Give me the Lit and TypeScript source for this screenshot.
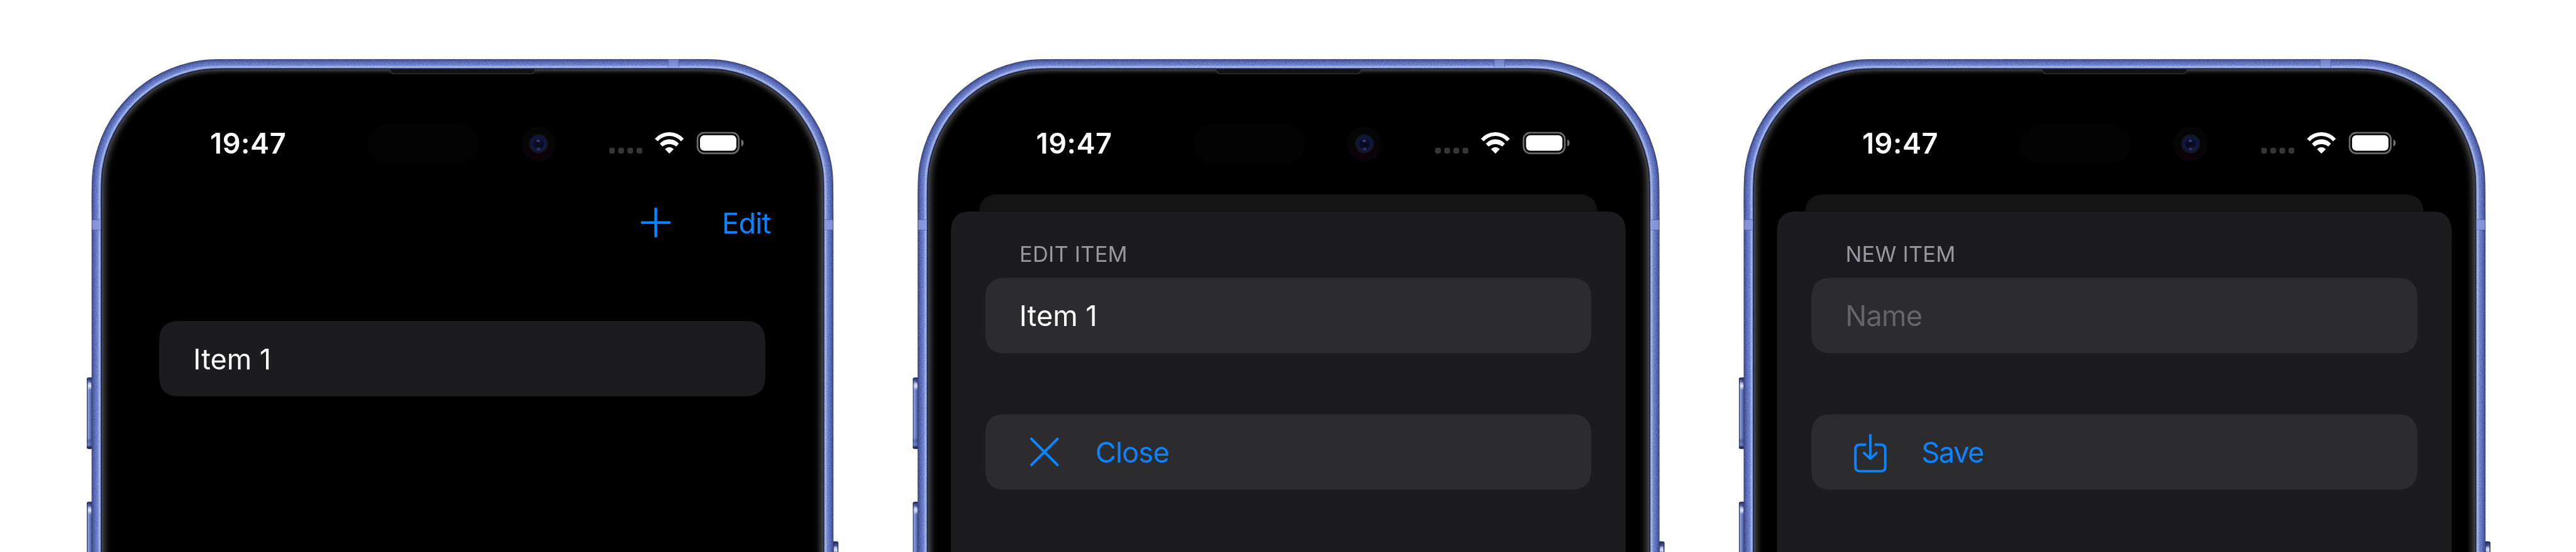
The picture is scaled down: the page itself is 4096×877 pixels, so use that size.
import { LitElement, html, svg, css } from "lit";
import { customElement, property } from "lit/decorators.js";

type RGB = [number, number, number];

/** Closed rounded rectangle whose corners ease into the straight edges. */
function smoothRect(x: number, y: number, w: number, h: number, r: number, s: number): string {
  const rad = Math.PI / 180;
  const p = (1 + s) * r;
  const beta = 90 * (1 - s);
  const arc = Math.sin((beta / 2) * rad) * r * Math.SQRT2;
  const alpha = (90 - beta) / 2;
  const p34 = r * Math.tan((alpha / 2) * rad);
  const c = p34 * Math.cos(45 * s * rad);
  const d = c * Math.tan(45 * s * rad);
  const b = (p - arc - c - d) / 3;
  const a = 2 * b;
  return [
    `M${x + w - p},${y}`,
    `c${a},0 ${a + b},0 ${a + b + c},${d}`,
    `a${r},${r} 0 0 1 ${arc},${arc}`,
    `c${d},${c} ${d},${b + c} ${d},${a + b + c}`,
    `L${x + w},${y + h}`,
    `L${x},${y + h}`,
    `L${x},${y + p}`,
    `c0,${-a} 0,${-(a + b)} ${d},${-(a + b + c)}`,
    `a${r},${r} 0 0 1 ${arc},${-arc}`,
    `c${c},${-d} ${b + c},${-d} ${a + b + c},${-d}`,
    "Z",
  ].join("");
}

/** Colour across the metal band, from the outer edge (0) to the glass (17.5). */
const BAND: [number, RGB][] = [
  [0, [66, 74, 120]],
  [1, [62, 74, 134]],
  [3, [76, 94, 168]],
  [6, [94, 114, 192]],
  [10, [112, 132, 210]],
  [12.5, [152, 174, 230]],
  [14, [184, 204, 240]],
  [15, [132, 152, 214]],
  [16, [52, 66, 130]],
  [17, [14, 20, 52]],
  [17.6, [16, 18, 30]],
];

/** Reflection that fades over the black glass. */
const GLASS: [number, RGB][] = [
  [18, [72, 72, 72]],
  [20, [54, 54, 54]],
  [24, [30, 30, 30]],
  [29, [10, 10, 10]],
  [34, [0, 0, 0]],
];

function mix(stops: [number, RGB][], t: number): string {
  let i = 0;
  while (i < stops.length - 2 && stops[i + 1][0] < t) i++;
  const [t0, c0] = stops[i];
  const [t1, c1] = stops[i + 1];
  const k = Math.min(1, Math.max(0, (t - t0) / (t1 - t0)));
  return `rgb(${c0.map((v, n) => Math.round(v + (c1[n] - v) * k)).join(",")})`;
}

const FW = 1296;
const FH = 2700;
const R = 222;

function ring(inset: number, insetY = inset): string {
  return smoothRect(inset, insetY, FW - 2 * inset, FH, R - (inset + insetY) / 2, 0.2);
}

const RINGS: { d: string; fill: string }[] = [];
for (let t = 0; t < 18; t += 0.75) RINGS.push({ d: ring(t), fill: mix(BAND, t) });
for (let t = 18; t <= 34; t += 1) RINGS.push({ d: ring(t, 18 + (t - 18) * 0.65), fill: mix(GLASS, t) });

@customElement("phone-bezel")
export class PhoneBezel extends LitElement {
  static styles = css`
    :host {
      display: block;
    }
    svg {
      display: block;
      width: 1320px;
      height: 861px;
    }
  `;

  private sideButton(x: number, y: number, h: number, side: "l" | "r") {
    return svg`
      <g transform="translate(${x} ${y})">
        <rect width="12" height=${h} rx="3" fill=${`url(#btn-${side})`}></rect>
        <rect width="12" height=${h} rx="3" fill="url(#btn-v)"></rect>
        <rect x=${side === "l" ? 2 : 4} y="8" width="6" height="14" rx="3" fill="url(#btn-shine)"></rect>
      </g>`;
  }

  render() {
    return html`
      <svg viewBox="-12 0 1320 861">
        <defs>
          <linearGradient id="btn-l" x1="0" x2="1" y1="0" y2="0">
            <stop offset="0" stop-color="#2c3868"></stop>
            <stop offset="0.1" stop-color="#4a5a98"></stop>
            <stop offset="0.2" stop-color="#93a8de"></stop>
            <stop offset="0.36" stop-color="#7388cb"></stop>
            <stop offset="0.6" stop-color="#5668b2"></stop>
            <stop offset="0.72" stop-color="#3c4a8c"></stop>
          </linearGradient>
          <linearGradient id="btn-r" x1="1" x2="0" y1="0" y2="0">
            <stop offset="0" stop-color="#2c3868"></stop>
            <stop offset="0.1" stop-color="#4a5a98"></stop>
            <stop offset="0.2" stop-color="#93a8de"></stop>
            <stop offset="0.36" stop-color="#7388cb"></stop>
            <stop offset="0.6" stop-color="#5668b2"></stop>
            <stop offset="0.72" stop-color="#3c4a8c"></stop>
          </linearGradient>
          <linearGradient id="btn-v" x1="0" x2="0" y1="0" y2="1">
            <stop offset="0" stop-color="#141c44" stop-opacity="0.9"></stop>
            <stop offset="0.05" stop-color="#2a3670" stop-opacity="0.5"></stop>
            <stop offset="0.1" stop-color="#2a3670" stop-opacity="0"></stop>
            <stop offset="0.84" stop-color="#2a3670" stop-opacity="0"></stop>
            <stop offset="0.89" stop-color="#2a3670" stop-opacity="0.45"></stop>
            <stop offset="0.94" stop-color="#5a6cb4" stop-opacity="0.4"></stop>
            <stop offset="0.98" stop-color="#141c44" stop-opacity="0.9"></stop>
          </linearGradient>
          <linearGradient id="btn-shine" x1="0" x2="0" y1="0" y2="1">
            <stop offset="0" stop-color="#dfe8f8" stop-opacity="0.4"></stop>
            <stop offset="0.5" stop-color="#e6eefb" stop-opacity="0.95"></stop>
            <stop offset="1" stop-color="#dfe8f8" stop-opacity="0"></stop>
          </linearGradient>
          <linearGradient id="lens-low" x1="0" x2="0" y1="0" y2="1">
            <stop offset="0.45" stop-color="#050506"></stop>
            <stop offset="0.75" stop-color="#0a0308"></stop>
          </linearGradient>
          <radialGradient id="lens">
            <stop offset="0" stop-color="#080a1c"></stop>
            <stop offset="0.5" stop-color="#0a0c26"></stop>
            <stop offset="0.68" stop-color="#101a4c"></stop>
            <stop offset="0.8" stop-color="#12142c"></stop>
            <stop offset="1" stop-color="#15161f"></stop>
          </radialGradient>
          <radialGradient id="glint">
            <stop offset="0" stop-color="#5a66a8"></stop>
            <stop offset="1" stop-color="#1a2458" stop-opacity="0"></stop>
          </radialGradient>
          <filter id="grain" x="0" y="0" width="100%" height="100%" color-interpolation-filters="sRGB">
            <feTurbulence type="fractalNoise" baseFrequency="0.7" numOctaves="2" seed="4"></feTurbulence>
            <feColorMatrix values="4 0 0 0 -1.6  4 0 0 0 -1.6  4 0 0 0 -1.3  0 0 0 0 0.1"></feColorMatrix>
            <feComposite in2="SourceAlpha" operator="in"></feComposite>
          </filter>
          <clipPath id="crop"><rect x="-12" y="0" width="1320" height="861"></rect></clipPath>
        </defs>

        ${this.sideButton(-8.3, 556, 124.5, "l")}
        ${this.sideButton(-8.3, 773, 124.5, "l")}
        ${this.sideButton(1292.6, 842, 200, "r")}

        ${RINGS.map((r) => svg`<path d=${r.d} fill=${r.fill}></path>`)}
        <g clip-path="url(#crop)">
          <path
            filter="url(#grain)"
            fill-rule="evenodd"
            d="${smoothRect(1, 1, FW - 2, 900, R - 1, 0.2)} ${smoothRect(15.5, 15.5, FW - 31, 900, R - 15.5, 0.2)}"
          ></path>
        </g>

        <g fill="#8c9ae0" fill-opacity="0.85">
          <rect x="1" y="280.7" width="15" height="17.6"></rect>
          <rect x="1280" y="280.7" width="15" height="17.6"></rect>
          <rect x="1007.3" y="1" width="18" height="14" fill-opacity="0.65"></rect>
        </g>
        <g fill="#3c4a88" fill-opacity="0.5">
          <rect x="1" y="280" width="15" height="1"></rect>
          <rect x="1" y="298" width="15" height="1"></rect>
          <rect x="1280" y="280" width="15" height="1"></rect>
          <rect x="1280" y="298" width="15" height="1"></rect>
          <rect x="1006.6" y="1" width="1" height="14"></rect>
          <rect x="1025" y="1" width="1" height="14"></rect>
        </g>

        <path
          d="M520,18 C523,19 522,25.6 528,25.6 H768 C774,25.6 773,19 776,18 Z"
          fill="#121212"
        ></path>
        <path
          d="M520,18 C523,19 522,25.6 528,25.6 H768 C774,25.6 773,19 776,18"
          fill="none"
          stroke="#3e3e3e"
          stroke-width="1.2"
        ></path>

        <rect x="482" y="114.7" width="194.5" height="66.5" rx="33" fill="#030303"></rect>
        <circle cx="780.5" cy="148" r="30.3" fill="url(#lens-low)"></circle>
        <circle cx="780.7" cy="148" r="16.5" fill="url(#lens)"></circle>
        <ellipse cx="780.2" cy="142.8" rx="5.5" ry="3.8" fill="url(#glint)"></ellipse>
        <ellipse cx="780.8" cy="157" rx="5.5" ry="4.2" fill="url(#glint)" opacity="0.7"></ellipse>
      </svg>
    `;
  }
}

@customElement("status-bar")
export class StatusBar extends LitElement {
  static styles = css`
    :host {
      display: flex;
      align-items: center;
      justify-content: space-between;
      height: 100px;
      margin-top: 97.3px;
      padding: 0 98px 0 149px;
    }
    .time {
      font-size: 49.5px;
      font-weight: 600;
      letter-spacing: 0.65px;
      line-height: 100px;
      color: #fff;
    }
    svg {
      display: block;
      width: 235px;
      height: 40px;
    }
  `;

  render() {
    return html`
      <span class="time">19:47</span>
      <svg viewBox="0 0 235 40">
        ${[0, 16, 32, 48].map((x) => svg`<rect x=${x} y="28" width="10" height="10" rx="3.4" fill="#363636"></rect>`)}
        <g fill="#fff">
          <path d="M80,12.3 A33.4,33.4 0 0 1 130.6,12.3 L125.6,16.7 A26.8,26.8 0 0 0 85,16.7 Z"></path>
          <path d="M88.7,20.9 A21.5,21.5 0 0 1 121.9,20.9 L117.4,25.7 A19.4,19.4 0 0 0 93.2,25.7 Z"></path>
          <path d="M97.6,30.4 Q105.3,23.2 113,30.4 L105.9,37.6 Q105.3,38.2 104.7,37.6 Z"></path>
        </g>
        <rect x="154.5" y="1.6" width="72" height="36" rx="11.5" fill="none" stroke="#6a6a6a" stroke-width="3"></rect>
        <rect x="158.8" y="5.8" width="63.6" height="27.4" rx="7.5" fill="#fff"></rect>
        <path d="M231,13.4 Q235,15.4 235,19.6 Q235,23.8 231,25.8 Z" fill="#757575"></path>
      </svg>
    `;
  }
}

const plusIcon = svg`
  <path d="M26.5,2.6 V50.4 M2.6,26.5 H50.4" fill="none" stroke="#0a84ff" stroke-width="4.8" stroke-linecap="round"></path>`;

const closeIcon = svg`
  <path d="M20.7,18 L66.3,63.6 M66.3,18 L20.7,63.6" fill="none" stroke="#0a84ff" stroke-width="4.4" stroke-linecap="round"></path>`;

const saveIcon = svg`
  <g fill="none" stroke="#0a84ff" stroke-width="4.3">
    <path d="M36,28.2 H25 Q17.2,28.2 17.2,36 V66.6 Q17.2,74.5 25,74.5 H61.6 Q69.4,74.5 69.4,66.6 V36 Q69.4,28.2 61.6,28.2 H50.7"></path>
    <path d="M43.3,11.5 V52.6" stroke-linecap="round"></path>
    <path d="M32.4,42.6 L43.3,52.8 L54.2,42.6" stroke-linecap="round" stroke-linejoin="round"></path>
  </g>`;

@customElement("phone-mockup")
export class PhoneMockup extends LitElement {
  @property() kind: "list" | "edit" | "new" = "list";

  static styles = css`
    :host {
      display: block;
      position: relative;
      width: 1296px;
      height: 861px;
      flex: none;
    }
    .bezel {
      position: absolute;
      top: 0;
      left: -12px;
    }
    .screen {
      position: relative;
      display: flex;
      flex-direction: column;
      box-sizing: border-box;
      width: 1179px;
      height: 861px;
      margin-left: 58.5px;
    }
    .nav {
      display: flex;
      align-items: center;
      gap: 89.6px;
      height: 100px;
      margin-top: 39.7px;
      padding-left: 900.7px;
    }
    .plus {
      display: block;
      width: 53px;
      height: 53px;
      margin-top: -2.4px;
    }
    .label {
      font-size: 49.5px;
      line-height: 100px;
      white-space: pre;
    }
    .blue {
      color: #0a84ff;
    }
    .tight {
      letter-spacing: -0.8px;
    }
    .tighter {
      letter-spacing: -1.5px;
    }
    .white {
      color: #fff;
    }
    .dim {
      color: #656569;
    }
    .card {
      display: flex;
      align-items: center;
      box-sizing: border-box;
      height: 132px;
      margin: 0 60px;
      padding: 1px 59.7px 0;
      border-radius: 46px;
      corner-shape: superellipse(1.7);
      background: #2c2c2e;
    }
    .list {
      margin-top: 120px;
    }
    .list .card {
      padding-top: 2px;
      background: #1c1c1e;
    }
    .back-wrap {
      height: 68.7px;
      overflow: hidden;
    }
    .back {
      height: 90px;
      margin: 38.7px 48.6px 0;
      border-radius: 46px 46px 0 0;
      corner-shape: superellipse(1.7);
      background: #141414;
    }
    .sheet {
      flex: 1;
      border-radius: 46px 46px 0 0;
      corner-shape: superellipse(1.7);
      background: #1c1c1e;
    }
    .heading {
      margin: 48.5px 0 15.5px 119.9px;
      font-size: 37.7px;
      line-height: 52px;
      letter-spacing: 0.3px;
      color: #98989f;
    }
    .action {
      margin-top: 106px;
      gap: 46.8px;
    }
    .icon {
      display: block;
      flex: none;
      width: 86px;
      height: 80px;
      margin-top: -2px;
    }
  `;

  private renderList() {
    return html`
      <div class="nav">
        <svg class="plus" viewBox="0 0 53 53">${plusIcon}</svg>
        <span class="label blue tight">Edit</span>
      </div>
      <div class="list">
        <div class="card"><span class="label white">Item 1</span></div>
      </div>
    `;
  }

  private renderSheet() {
    const edit = this.kind === "edit";
    return html`
      <div class="back-wrap"><div class="back"></div></div>
      <div class="sheet">
        <div class="heading">${edit ? "EDIT ITEM" : "NEW ITEM"}</div>
        <div class="card">
          ${edit
            ? html`<span class="label white">Item 1</span>`
            : html`<span class="label dim tight">Name</span>`}
        </div>
        <div class="card action">
          <svg class="icon" viewBox="0 0 86 80">${edit ? closeIcon : saveIcon}</svg>
          ${edit
            ? html`<span class="label blue tight">Close</span>`
            : html`<span class="label blue tighter">Save</span>`}
        </div>
      </div>
    `;
  }

  render() {
    return html`
      <phone-bezel class="bezel"></phone-bezel>
      <div class="screen">
        <status-bar></status-bar>
        ${this.kind === "list" ? this.renderList() : this.renderSheet()}
      </div>
    `;
  }
}

@customElement("app-root")
export class AppRoot extends LitElement {
  static styles = css`
    :host {
      display: block;
      width: 4096px;
      height: 877px;
      overflow: hidden;
      background: #fff;
      font-family: Inter, "Liberation Sans", sans-serif;
    }
    .stage {
      display: flex;
      gap: 147px;
      box-sizing: border-box;
      width: 4500px;
      height: 964px;
      padding: 103px 0 0 159.5px;
      transform: scale(0.91022);
      transform-origin: 0 0;
    }
  `;

  render() {
    return html`
      <div class="stage">
        <phone-mockup kind="list"></phone-mockup>
        <phone-mockup kind="edit"></phone-mockup>
        <phone-mockup kind="new"></phone-mockup>
      </div>
    `;
  }
}
